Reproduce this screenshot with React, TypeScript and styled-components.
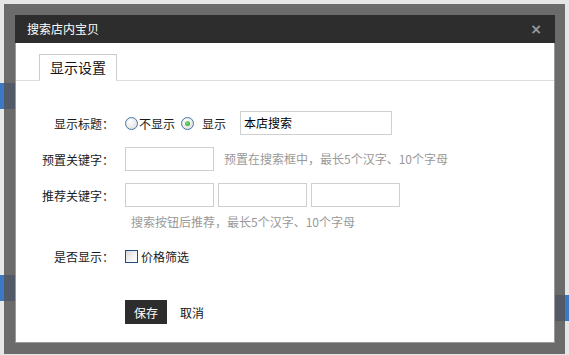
import * as React from 'react';
import styled, { createGlobalStyle, css } from 'styled-components';

const GlobalStyle = createGlobalStyle`
  html, body {
    margin: 0;
    padding: 0;
  }
  body {
    width: 569px;
    height: 355px;
    overflow: hidden;
    font-family: "Noto Sans CJK SC", "Liberation Sans", sans-serif;
    font-size: 12px;
    color: #222;
  }
`

/* page behind the mask */
const Page = styled.div`
  position: relative;
  display: flex;
  width: 569px;
  height: 355px;
  background: #e6e6e6;
`
const PageColumn = styled.div<{ $top: number }>`
  flex: 1;
  display: flex;
  flex-direction: column;
  gap: 166px;
  padding-top: ${p => p.$top}px;
`
const PageRow = styled.div`
  height: 26px;
  background: #3c78c6;
`

/* dialog */
const Frame = styled.div`
  position: absolute;
  top: 4px;
  left: 4px;
  width: 540px;
  padding: 11px 10px 11px 11px;
  background: rgba(85, 85, 85, 0.85);
`
const Dialog = styled.div`
  background: #fff;
  border: 1px solid #9a9a9a;
  border-top: none;
  height: 328px;
  box-sizing: border-box;
  display: flex;
  flex-direction: column;
`
const TitleBar = styled.div`
  height: 28px;
  margin: 0 -1px;
  background: #2d2d2d;
  color: #fff;
  display: flex;
  align-items: center;
  justify-content: space-between;
  padding: 0 13px 0 12px;
`
const Title = styled.span`
  font-size: 12px;
  line-height: 28px;
`
const Close = styled.span`
  color: #9a9a9a;
  font-family: "DejaVu Sans", sans-serif;
  font-weight: bold;
  font-size: 14px;
  line-height: 28px;
`
const Tabs = styled.div`
  display: flex;
  padding: 11px 0 0 23px;
  border-bottom: 1px solid #dddddd;
`
const Tab = styled.div`
  height: 25px;
  padding: 0 10px;
  margin-bottom: -1px;
  border: 1px solid #cccccc;
  border-bottom-color: #fff;
  background: #fff;
  font-size: 14px;
  line-height: 25px;
  color: #111;
`
const Form = styled.div`
  display: flex;
  flex-direction: column;
  padding-top: 30px;
`
const Row = styled.div<{ $gap?: number }>`
  display: flex;
  align-items: center;
  height: 24px;
  margin-bottom: ${p => p.$gap ?? 12}px;
`
const Label = styled.span`
  width: 98px;
  margin-right: 11px;
  text-align: right;
  color: #1a1a1a;
`
const Field = styled.div<{ $w: number }>`
  width: ${p => p.$w}px;
  height: 24px;
  box-sizing: border-box;
  border: 1px solid #cfcfcf;
  padding: 0 3px;
  line-height: 22px;
  color: #000;
`
const Fields = styled.div`
  display: flex;
  gap: 4px;
`
const Hint = styled.span<{ $indent?: number }>`
  color: #999;
  margin-left: ${p => p.$indent ?? 0}px;
  line-height: 16px;
`
const HintLine = styled.div`
  padding-left: 115px;
  height: 16px;
  margin-bottom: 15px;
`
const markBase = css`
  display: inline-block;
  width: 13px;
  height: 13px;
  box-sizing: border-box;
  flex: none;
`
const Radio = styled.span<{ $on?: boolean }>`
  ${markBase}
  position: relative;
  border-radius: 50%;
  border: 1px solid #4673a3;
  background: radial-gradient(circle at 40% 35%, #ffffff 0%, #e4e4e4 70%, #cfcfcf 100%);
  ${p => p.$on && css`
    &::after {
      content: '';
      position: absolute;
      left: 3px;
      top: 3px;
      width: 5px;
      height: 5px;
      border-radius: 50%;
      background: radial-gradient(circle at 40% 35%, #7fe07f, #1d9e1d);
    }
  `}
`
const Check = styled.span`
  ${markBase}
  border: 1px solid #1f4f80;
  background: linear-gradient(135deg, #d8d8d8 0%, #f4f4f4 60%, #ffffff 100%);
`
const Option = styled.label<{ $gap: number; $after?: number }>`
  display: flex;
  align-items: center;
  gap: ${p => p.$gap}px;
  margin-right: ${p => p.$after ?? 0}px;
  color: #1a1a1a;
`
const Buttons = styled.div`
  display: flex;
  align-items: center;
  gap: 13px;
  padding-left: 109px;
  margin-top: 20px;
`
const SaveButton = styled.button`
  height: 24px;
  width: 42px;
  border: none;
  padding: 0;
  background: #2d2d2d;
  color: #fff;
  font: inherit;
  font-size: 12px;
`
const CancelButton = styled.button`
  height: 24px;
  border: none;
  padding: 0;
  background: none;
  color: #111;
  font: inherit;
  font-size: 12px;
`

export default function App() {
  return (
    <>
      <GlobalStyle />
      <Page>
        <PageColumn $top={83}>
          <PageRow />
          <PageRow />
        </PageColumn>
        <PageColumn $top={295}>
          <PageRow />
        </PageColumn>

        <Frame>
          <Dialog>
            <TitleBar>
              <Title>搜索店内宝贝</Title>
              <Close>×</Close>
            </TitleBar>
            <Tabs>
              <Tab>显示设置</Tab>
            </Tabs>
            <Form>
              <Row>
                <Label>显示标题：</Label>
                <Option $gap={1} $after={6}>
                  <Radio />不显示
                </Option>
                <Option $gap={8} $after={14}>
                  <Radio $on />显示
                </Option>
                <Field $w={152}>本店搜索</Field>
              </Row>
              <Row>
                <Label>预置关键字：</Label>
                <Field $w={89} />
                <Hint $indent={10}>预置在搜索框中，最长5个汉字、10个字母</Hint>
              </Row>
              <Row $gap={6}>
                <Label>推荐关键字：</Label>
                <Fields>
                  <Field $w={89} />
                  <Field $w={89} />
                  <Field $w={89} />
                </Fields>
              </Row>
              <HintLine>
                <Hint>搜索按钮后推荐，最长5个汉字、10个字母</Hint>
              </HintLine>
              <Row>
                <Label>是否显示：</Label>
                <Option $gap={3}>
                  <Check />价格筛选
                </Option>
              </Row>
              <Buttons>
                <SaveButton>保存</SaveButton>
                <CancelButton>取消</CancelButton>
              </Buttons>
            </Form>
          </Dialog>
        </Frame>
      </Page>
    </>
  )
}
